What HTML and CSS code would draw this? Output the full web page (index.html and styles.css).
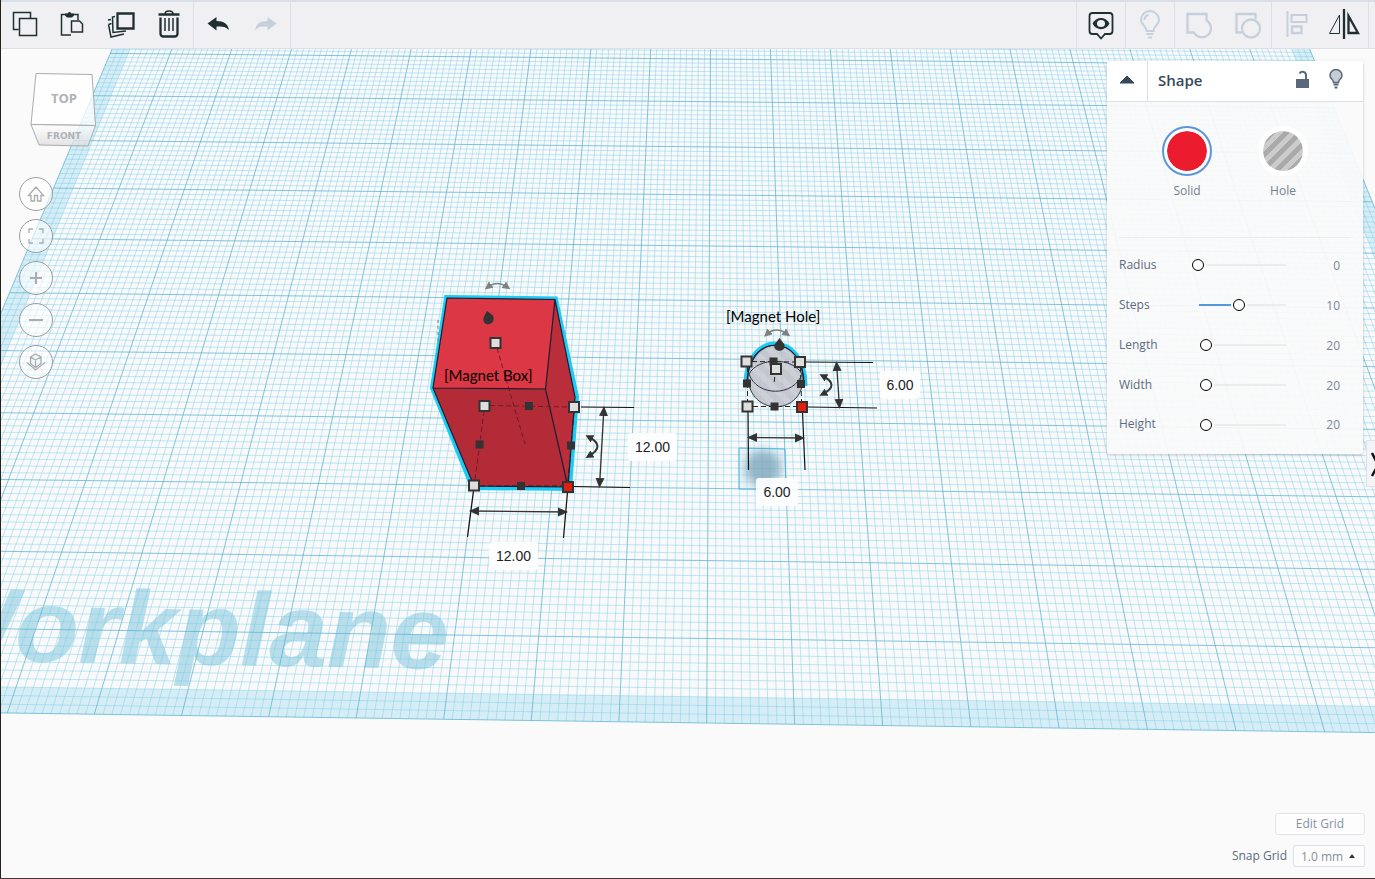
FILE: index.html
```
<!DOCTYPE html>
<html lang="en">
<head>
    <meta charset="UTF-8">
    <title>3D Editor</title>
    <meta name="viewport" content="width=device-width, initial-scale=1.0">
    <link rel="stylesheet" href="styles.css">
</head>
<body>
    <header class="toolbar">
        <div class="tool-group">
            <button class="tool" aria-label="Copy">
                <svg viewBox="0 0 48 48"><path d="M17.500 29.500h-5v-17h17v6M18.500 18.500h17v17h-17z"/></svg>
            </button>
            <button class="tool" aria-label="Paste">
                <svg viewBox="0 0 48 48"><path d="M22 35H12.500V14.500H29V20"/><path class="fill" d="M16 13.500h3c0-2 3-2 3 0h3v2l-2 2h-5l-2-2z"/><path d="M22.500 21h8l3 3v8h-11z"/></svg>
            </button>
            <button class="tool" aria-label="Duplicate">
                <svg viewBox="0 0 48 48"><path d="M18 16.500l-2.500.5.500 15.500 13-1.500M14 19.500l-3 .500M11.500 24.500l2.500 12.500 13-3M11.500 24.500l3-1"/><path class="thick" d="M20.500 13.500h16v15h-16z"/></svg>
            </button>
            <button class="tool" aria-label="Delete">
                <svg viewBox="0 0 48 48"><path class="thick" d="M13.500 14.500h21M15.500 17.500v16q0 3 3 3h11q3 0 3-3v-16"/><path d="M20 14c0-4 8-4 8 0M20 18v13M24 18v13M28 18v13"/></svg>
            </button>
        </div>
        <div class="tool-group">
            <button class="tool" aria-label="Undo">
                <svg viewBox="0 0 48 48"><path class="fill" d="M13.500 23.500L22.500 17v4C30 21 34 24 35 30c-3-3-6-4-12.500-3.500v4z"/></svg>
            </button>
            <button class="tool off" aria-label="Redo" disabled>
                <svg viewBox="0 0 48 48"><path class="fill" d="M34.500 23.500L25.500 17v4C18 21 14 24 13 30c3-3 6-4 12.500-3.500v4z"/></svg>
            </button>
        </div>
        <div class="spacer"></div>
        <div class="tool-group">
            <button class="tool" aria-label="Show all">
                <svg viewBox="0 0 48 48"><path class="frame" d="M15.500 13h17q3 0 3 3v15q0 3-3 3H28l-4 4.500-4-4.500h-4.500q-3 0-3-3V16q0-3 3-3z"/><path class="fill" d="M15.500 23.500C19 16 29 16 32.500 23.500 29 31 19 31 15.500 23.500z"/><ellipse class="eye" cx="24" cy="23.500" rx="4" ry="3.500"/></svg>
            </button>
        </div>
        <div class="tool-group">
            <button class="tool off" aria-label="Toggle hints" disabled>
                <svg viewBox="0 0 48 48"><path d="M20.500 31c0-5-5.500-6-5.500-11a9 9 0 0 1 18 0c0 5-5.500 6-5.500 11zM20.500 34h7M22 37.500h4M18.500 20q0-4 4-5"/></svg>
            </button>
        </div>
        <div class="tool-group">
            <button class="tool off" aria-label="Group" disabled>
                <svg viewBox="0 0 48 48"><path class="thick" d="M12.500 14h19v6.500a9 9 0 1 1-12.500 12H12.500z"/></svg>
            </button>
            <button class="tool off" aria-label="Ungroup" disabled>
                <svg viewBox="0 0 48 48"><path class="thick" d="M19 32.500h-5.500V14h19v5"/><circle class="thick" cx="28" cy="28.500" r="9"/></svg>
            </button>
        </div>
        <div class="tool-group">
            <button class="tool off" aria-label="Align" disabled>
                <svg viewBox="0 0 48 48"><path d="M15.500 11v26M19.500 15h15v7h-15z"/><path class="thick" d="M20 26.500h9.500v6.500H20z"/></svg>
            </button>
            <button class="tool" aria-label="Flip">
                <svg viewBox="0 0 48 48"><path class="thin" d="M9.500 33.500h10V15z"/><path class="thick" d="M24 9v30M28.500 16v17h9.500z"/></svg>
            </button>
        </div>
        <div class="toolbar-end"></div>
    </header>

    <main class="workspace">
        <svg class="scene" viewBox="0 49 1375 830" preserveAspectRatio="xMidYMin slice">
            <defs>
                <marker id="arrow" viewBox="0 0 10 10" refX="9" refY="5" markerWidth="10" markerHeight="10" markerUnits="userSpaceOnUse" orient="auto-start-reverse">
                    <path d="M0 0.500L10 5 0 9.500z" fill="#333"/>
                </marker>
                <marker id="turn" viewBox="0 0 8 8" refX="4" refY="4" markerWidth="8" markerHeight="8" markerUnits="userSpaceOnUse" orient="auto-start-reverse">
                    <path d="M0 0L8 4 0 8z" fill="context-stroke"/>
                </marker>
                <pattern id="stripes" width="12" height="12" patternUnits="userSpaceOnUse" patternTransform="rotate(-45)">
                    <rect width="12" height="12" fill="#c9cbd2"/>
                    <rect width="6" height="12" fill="#c0c2ca"/>
                </pattern>
                <filter id="soft" x="-50%" y="-50%" width="200%" height="200%">
                    <feGaussianBlur stdDeviation="5"/>
                </filter>
            </defs>

            <path id="plane" class="plane"/>
            <path id="band" class="band"/>
            <text class="plane-name" x="-70" y="661" transform="rotate(1)">Workplane</text>
            <path id="minor" class="minor"/>
            <path id="major" class="major"/>

            <!-- magnet box -->
            <path class="glow" d="M447 298L555 299.500 576 397 569 488 473 487 433 388z"/>
            <path fill="#dc3744" d="M447 298L555 299.500 545.500 389 433 388z"/>
            <path fill="#b32b37" d="M433 388L545.500 389 568 487 474 486z"/>
            <path fill="#b92e3a" d="M555 299.500L575 397 568 487 545.500 389z"/>
            <path class="edge" d="M447 298L555 299.500 575 397 568 487 474 486 433 388zM433 388L545.500 389 568 487M545.500 389L555 299.500"/>
            <path class="dash faint" d="M497 348L525 444M490 405.500L569 407M484 411L475 480"/>
            <path class="dash" d="M574 412L568 481M480 486H562"/>
            <path class="cone" d="M487 311L493 315.500c4 11-13 12-9 1z"/>
            <text class="object-name" x="444" y="381">[Magnet Box]</text>
            <path class="turn-light" d="M488 287Q497 280 507 287"/>
            <path class="turn-light dotted" d="M438 320V341"/>
            <path class="turn" d="M589 437Q606 446 589 456"/>
            <path class="guide" d="M581 407L634 407.500M574 486.500L630 487.500M473.500 491L467.500 537M567.500 492L563.500 538"/>
            <path class="measure" d="M604 407L599.500 487"/>
            <path class="measure" d="M470 511L567 512"/>
            <path class="knob" d="M525 402h8v8h-8zM475.500 440.500h8v8h-8zM567 441.500h8v8h-8zM517 482h8v8h-8z"/>
            <path class="handle" d="M490.500 338h10v10h-10zM479.500 401h10v10h-10zM569 402h10v10h-10zM469 480.500h10v10h-10z"/>
            <path class="handle active" d="M563 482h10v10h-10z"/>

            <!-- magnet hole -->
            <circle class="shadow" cx="763" cy="468" r="18"/>
            <path class="shadow-box" d="M739 448L785 449 786 489 739 489z"/>
            <path class="glow" d="M746.500 385C746 331 805 331 804.500 386"/>
            <path class="hole" d="M748 378C748 334 803 334 803 380 801 416 750 416 748 378z"/>
            <path class="hole-line" d="M749 374C758 357 793 357 802 374 794 397 757 397 749 374"/>
            <path class="edge" d="M747 385C747 332 804 332 804 385"/>
            <path class="dash" d="M752 361.500L795 362M747.500 367V401M753 406.500H797M800.500 367L801.500 401M775.500 369L774 384"/>
            <path class="cone" d="M779.500 338L784 344c4 9-13 9-9 0z"/>
            <text class="object-name" x="726" y="322">[Magnet Hole]</text>
            <path class="turn-light" d="M767 334Q776 326 787 334"/>
            <path class="turn" d="M823 376Q840 385 823 394"/>
            <path class="guide" d="M805 362L873 362.500M807 407L877 408M748 411L748.500 470M802.500 412L805 470"/>
            <path class="measure" d="M836.500 362L839.500 408"/>
            <path class="measure" d="M748 437.500L804 438"/>
            <path class="knob" d="M769.500 357.500h8v8h-8zM743 379.500h8v8h-8zM797 380h8v8h-8zM770.500 402.500h8v8h-8z"/>
            <path class="handle" d="M741.500 356.500h10v10h-10zM795 357h10v10h-10zM771 364h10v10h-10zM742.500 401.500h10v10h-10z"/>
            <path class="handle active" d="M797 402h10v10h-10z"/>

            <foreignObject x="628" y="433" width="49" height="28"><input class="dimension" aria-label="Box width" value="12.00"></foreignObject>
            <foreignObject x="489" y="542" width="49" height="28"><input class="dimension" aria-label="Box length" value="12.00"></foreignObject>
            <foreignObject x="880" y="371" width="40" height="28"><input class="dimension" aria-label="Hole width" value="6.00"></foreignObject>
            <foreignObject x="756" y="478" width="42" height="28"><input class="dimension" aria-label="Hole length" value="6.00"></foreignObject>
        </svg>

        <div class="view-controls">
            <svg class="view-cube" viewBox="0 0 68 76">
                <defs>
                    <linearGradient id="shade" x1="0" y1="0" x2="0" y2="1">
                        <stop offset="0" stop-color="#fff"/>
                        <stop offset="1" stop-color="#dcdddf"/>
                    </linearGradient>
                </defs>
                <path class="cube-top" d="M8 1.500L64 2.500 67.500 53.500 3 52.500z"/>
                <path class="cube-front" d="M3 52.500L67.500 53.500 60 74 11 73z"/>
                <text class="cube-label" x="36" y="31">TOP</text>
                <text class="cube-label small" x="36" y="67">FRONT</text>
            </svg>
            <nav class="view-buttons">
                <button aria-label="Home view"><svg viewBox="0 0 34 34"><path d="M9.500 18.500L17 10l7.500 8.500H22V24h-3.500v-5.500h-3V24H12v-5.500z"/></svg></button>
                <button aria-label="Fit view"><svg viewBox="0 0 34 34"><path d="M10 14v-4h4M20 10h4v4M24 20v4h-4M14 24h-4v-4"/></svg></button>
                <button aria-label="Zoom in"><svg viewBox="0 0 34 34"><path class="bold" d="M11 17h12M17 11v12"/></svg></button>
                <button aria-label="Zoom out"><svg viewBox="0 0 34 34"><path class="bold" d="M10 17h14"/></svg></button>
                <button aria-label="Perspective"><svg viewBox="0 0 34 34"><path d="M11.500 12l5-3 5.500 3v6.500l-5.500 4-5-4zM11.500 12l5 3 5.500-3M16.500 15v7.500M8 17.500l8.500 7.500 9.500-7.500"/></svg></button>
            </nav>
        </div>

        <div class="side">
            <aside class="panel">
                <div class="panel-header">
                    <button class="collapse" aria-label="Collapse panel"><svg viewBox="0 0 16 9"><path d="M1 8L8 1l7 7z"/></svg></button>
                    <h1 class="panel-title">Shape</h1>
                    <button class="icon-button" aria-label="Lock"><svg viewBox="0 0 16 20"><path class="solid" d="M2 10h13v9H2z"/><path class="line" d="M12 10V5.500a3.500 3.500 0 0 0-6.500-1"/></svg></button>
                    <button class="icon-button" aria-label="Hide"><svg viewBox="0 0 16 20"><path class="glass" d="M5.500 13.500C5.500 10 2 10 2 6.500a6 6 0 0 1 12 0C14 10 10.500 10 10.500 13.500z"/><path class="line" d="M5.500 15.500h5M6.500 18.500h3"/></svg></button>
                </div>
                <div class="swatches">
                    <label class="swatch"><input type="radio" name="fill" class="swatch-solid" checked>Solid</label>
                    <label class="swatch"><input type="radio" name="fill" class="swatch-hole">Hole</label>
                </div>
                <div class="params">
                    <div class="param"><label for="radius">Radius</label><input type="range" id="radius" min="0" max="10" value="0"><input class="value" aria-label="Radius value" value="0"></div>
                    <div class="param"><label for="steps">Steps</label><input type="range" id="steps" class="filled" min="0" max="20" value="10"><input class="value" aria-label="Steps value" value="10"></div>
                    <div class="param"><label for="length">Length</label><input type="range" id="length" min="0" max="200" value="20"><input class="value" aria-label="Length value" value="20"></div>
                    <div class="param"><label for="width">Width</label><input type="range" id="width" min="0" max="200" value="20"><input class="value" aria-label="Width value" value="20"></div>
                    <div class="param"><label for="height">Height</label><input type="range" id="height" min="0" max="200" value="20"><input class="value" aria-label="Height value" value="20"></div>
                </div>
            </aside>
            <div class="grid-controls">
                <button class="edit-grid">Edit Grid</button>
                <div class="snap">
                    <label for="snap">Snap Grid</label>
                    <div class="snap-select">
                        <select id="snap"><option>1.0 mm</option></select>
                    </div>
                </div>
            </div>
        </div>
        <button class="drawer" aria-label="Open shapes"><svg viewBox="0 0 9 47"><path d="M5 12L11 24 5 35"/></svg></button>
    </main>

    <script>
        // project a point of the 200mm workplane, s from the middle line, v from the front edge
        function project(s, v) {
            const w = 1 + 0.0416 * v - 0.00065 * s;
            const x = (706.7 + 87.42 * s + 29.9 * v) / w;
            const y = (723 - 57.9 * v + 0.79 * s) / w;
            return x.toFixed(1) + ' ' + y.toFixed(1);
        }

        function line(s1, v1, s2, v2) {
            return 'M' + project(s1, v1) + 'L' + project(s2, v2);
        }

        function box(s, v, back) {
            return 'M' + [project(-s, v), project(s, v), project(s, back), project(-s, back)].join('L') + 'z';
        }

        const depth = 13;
        let minor = '';
        let major = '';
        for (let i = -100; i <= 100; i++) {
            const d = line(i / 10, 0, i / 10, depth);
            if (i % 10 === 0) major += d; else minor += d;
        }
        for (let i = 0; i <= depth * 10; i++) {
            const d = line(-10, i / 10, 10, i / 10);
            if (i % 10 === 0) major += d; else minor += d;
        }
        document.getElementById('plane').setAttribute('d', box(10, 0, depth));
        document.getElementById('band').setAttribute('d', box(10, 0, depth) + box(9.7, 0.3, depth));
        document.getElementById('minor').setAttribute('d', minor);
        document.getElementById('major').setAttribute('d', major);
    </script>
</body>
</html>
```
FILE: styles.css
```
* {
    box-sizing: border-box;
}
body {
    margin: 0;
    height: 100vh;
    display: flex;
    flex-direction: column;
    position: relative;
    overflow: hidden;
    background: #fafafa;
    color: #5b6b80;
    font-family: "Open Sans", "Noto Sans", sans-serif;
    font-size: 12px;
}
body::after {
    content: "";
    position: absolute;
    inset: 0;
    border-left: 1px solid #25231c;
    border-bottom: 1px solid #4a3436;
    pointer-events: none;
}
button {
    padding: 0;
    border: none;
    background: none;
    font-family: inherit;
    cursor: pointer;
}
svg {
    display: block;
}

/* toolbar */
.toolbar {
    display: flex;
    height: 49px;
    padding-left: 1px;
    background: #f0f0f3;
    border-top: 2px solid #dbdfe9;
    border-bottom: 1px solid #dcdfe5;
}
.tool-group {
    display: flex;
    border-right: 1px solid #dcdfe5;
}
.spacer {
    flex: 1;
    border-right: 1px solid #dcdfe5;
}
.toolbar-end {
    width: 6px;
}
.tool {
    width: 48px;
    height: 46px;
    color: #20302f;
}
.tool svg {
    width: 48px;
    height: 48px;
    margin-top: -2px;
    fill: none;
    stroke: currentColor;
    stroke-width: 1.5;
}
.tool .thin {
    stroke-width: 1;
}
.tool .frame {
    stroke-width: 1.8;
}
.tool .thick {
    stroke-width: 2.3;
}
.tool .fill {
    fill: currentColor;
    stroke: none;
}
.tool .eye {
    fill: #f0f0f3;
    stroke: none;
}
.tool.off {
    color: #c5d0dc;
}
.tool.off svg {
    stroke-width: 2;
}

/* scene */
.workspace {
    flex: 1;
    min-height: 0;
    position: relative;
    display: flex;
    justify-content: space-between;
}
.scene {
    position: absolute;
    inset: 0;
    width: 100%;
    height: 100%;
}
.plane {
    fill: #f9f9f9;
}
.band {
    fill: #d7edf5;
    fill-rule: evenodd;
}
.minor {
    fill: none;
    stroke: #6fcdec;
    stroke-opacity: 0.43;
}
.major {
    fill: none;
    stroke: #4fafd0;
    stroke-opacity: 0.7;
}
.plane-name {
    font: italic bold 104px "Liberation Sans", Arial, sans-serif;
    fill: #b9deea;
}
.glow {
    fill: none;
    stroke: #1ccbf3;
    stroke-width: 6;
}
.edge {
    fill: none;
    stroke: #1b1b30;
    stroke-width: 1.2;
}
.dash {
    fill: none;
    stroke: #222;
    stroke-dasharray: 5 3;
}
.faint {
    stroke: #701c26;
}
.cone {
    fill: #333;
}
.object-name {
    font: 15px Lato, sans-serif;
    fill: #000;
}
.guide {
    fill: none;
    stroke: #111;
    stroke-width: 1.2;
}
.measure {
    fill: none;
    stroke: #333;
    stroke-width: 1.3;
    marker-start: url(#arrow);
    marker-end: url(#arrow);
}
.turn,
.turn-light {
    fill: none;
    stroke: #333;
    stroke-width: 2;
    marker-start: url(#turn);
    marker-end: url(#turn);
}
.turn-light {
    stroke: #808080;
    stroke-width: 1.3;
}
.dotted {
    stroke-width: 1;
    stroke-dasharray: 3 3;
    marker-start: none;
    marker-end: none;
}
.knob {
    fill: #333;
}
.handle {
    fill: #dedede;
    stroke: #333;
    stroke-width: 2;
}
.active {
    fill: #e01f10;
}
.hole {
    fill: url(#stripes);
    stroke: #2d3442;
    fill-opacity: 0.9;
}
.hole-line {
    fill: none;
    stroke: #2d3442;
}
.shadow {
    fill: #5e8ba5;
    opacity: 0.75;
    filter: url(#soft);
}
.shadow-box {
    fill: #bfe3ef;
    fill-opacity: 0.25;
    stroke: #4bb6dd;
}
.dimension {
    display: block;
    width: 100%;
    height: 28px;
    padding: 0;
    border: none;
    border-radius: 3px;
    background: rgba(255, 255, 255, 0.9);
    color: #222;
    font: 14px "Liberation Sans", Arial, sans-serif;
    text-align: center;
}

/* view cube and buttons */
.view-controls {
    position: relative;
    align-self: flex-start;
    padding: 23px 0 0 19px;
}
.view-cube {
    width: 68px;
    height: 76px;
    margin-left: 9px;
}
.cube-top,
.cube-front {
    fill: rgba(255, 255, 255, 0.75);
    stroke: #a9abad;
}
.cube-front {
    fill: url(#shade);
    fill-opacity: 0.8;
}
.cube-label {
    font: bold 13px "Open Sans", sans-serif;
    fill: #aeb2b6;
    text-anchor: middle;
}
.cube-label.small {
    font: bold 9px "DejaVu Sans", sans-serif;
}
.view-buttons {
    display: flex;
    flex-direction: column;
    gap: 8px;
    margin-top: 29px;
}
.view-buttons button {
    width: 34px;
    height: 34px;
    border: 1px solid #9b9ea2;
    border-radius: 50%;
    background: rgba(255, 255, 255, 0.6);
}
.view-buttons svg {
    width: 34px;
    height: 34px;
    margin: -1px;
    fill: none;
    stroke: #a9adaf;
    stroke-width: 1.3;
}
.view-buttons .bold {
    stroke-width: 2;
}

/* right side */
.side {
    position: relative;
    display: flex;
    flex-direction: column;
    justify-content: space-between;
    align-items: flex-end;
    padding: 12px 10px 12px 0;
}
.panel {
    width: 256px;
    margin-right: 2px;
    border-radius: 3px;
    background: rgba(250, 250, 250, 0.93);
    box-shadow: 0 1px 3px rgba(80, 100, 130, 0.35);
}
.panel-header {
    display: flex;
    align-items: center;
    height: 41px;
    padding-right: 19px;
    border-bottom: 1px solid #dcdfe5;
    border-radius: 3px 3px 0 0;
    background: #fff;
}
.collapse {
    display: flex;
    align-items: center;
    justify-content: center;
    align-self: stretch;
    width: 41px;
    border-right: 1px solid #dcdfe5;
}
.collapse svg {
    width: 16px;
    height: 9px;
    margin-bottom: 4px;
    fill: #34495e;
    stroke: #34495e;
    stroke-linejoin: round;
}
.panel-title {
    flex: 1;
    margin: 0 0 2px 10px;
    color: #34495e;
    font-size: 15px;
    font-weight: 600;
}
.icon-button {
    margin-left: 18px;
}
.icon-button svg {
    width: 16px;
    height: 20px;
    margin-bottom: 5px;
}
.icon-button .solid {
    fill: #5a6879;
}
.icon-button .line {
    fill: none;
    stroke: #5a6879;
    stroke-width: 2;
}
.icon-button .glass {
    fill: #c5ccd4;
    stroke: #5a6879;
    stroke-width: 1.5;
}
.swatches {
    display: flex;
    justify-content: center;
    gap: 46px;
    margin: 0 12px;
    padding: 24px 0 38px;
    border-bottom: 1px solid #ececec;
}
.swatch {
    display: flex;
    flex-direction: column;
    align-items: center;
    gap: 6px;
    width: 50px;
    line-height: 17px;
    color: #738090;
}
.swatch input {
    appearance: none;
    width: 50px;
    height: 50px;
    margin: 0;
    border: 5px solid #fff;
    border-radius: 50%;
}
.swatch-solid {
    background: #eb1c2d content-box;
}
.swatch-hole {
    background: repeating-linear-gradient(135deg, #ccc 0 5px, #aaa 5px 10px);
    background-clip: padding-box;
}
.swatch input:checked {
    border: 2px solid #5a96db;
    padding: 3px;
    box-shadow: inset 0 0 0 3px #fff;
}
.params {
    padding: 7px 12px 10px;
}
.param {
    display: flex;
    align-items: center;
    height: 40px;
}
.param:last-child {
    height: 39px;
}
.param label {
    width: 73px;
    padding-bottom: 2px;
}
.param input[type="range"] {
    appearance: none;
    width: 94px;
    height: 14px;
    margin: 0;
    background: linear-gradient(#ececec, #ececec) 7px 6px / 100% 2px no-repeat;
}
.param input.filled {
    background: linear-gradient(90deg, #5596dc 40px, #ececec 40px) 7px 6px / 100% 2px no-repeat;
}
.param input[type="range"]::-webkit-slider-thumb {
    appearance: none;
    width: 12px;
    height: 12px;
    border: 1px solid #000;
    border-radius: 50%;
    background: #fff;
    box-shadow: 0 0 0 2px #fafafa;
}
.value {
    width: 40px;
    margin-left: auto;
    margin-right: 11px;
    padding: 0;
    border: none;
    background: none;
    color: #7b8796;
    font: 12px "Open Sans", sans-serif;
    text-align: right;
}

/* grid settings */
.grid-controls {
    display: flex;
    flex-direction: column;
    align-items: flex-end;
    gap: 10px;
}
.edit-grid {
    width: 90px;
    height: 22px;
    border: 1px solid #e2e4e8;
    border-radius: 3px;
    background: #fdfdfd;
    color: #8592a3;
    font-size: 12px;
    line-height: 18px;
}
.snap {
    display: flex;
    align-items: center;
    gap: 6px;
}
.snap label {
    padding-bottom: 2px;
}
.snap-select {
    display: grid;
    align-items: center;
    width: 72px;
}
.snap-select select {
    grid-area: 1 / 1;
    appearance: none;
    height: 22px;
    padding: 0 7px;
    border: 1px solid #dcdfe9;
    border-radius: 2px;
    background: #fdfdfd;
    color: #8a8f96;
    font: 12px "Open Sans", sans-serif;
}
.snap-select::after {
    content: "";
    grid-area: 1 / 1;
    justify-self: end;
    margin-right: 10px;
    border: 3px solid transparent;
    border-top: none;
    border-bottom: 4px solid #333;
    pointer-events: none;
}
.drawer {
    position: absolute;
    right: 0;
    top: 391px;
    width: 9px;
    height: 47px;
    border: 1px solid #dfe1ea;
    border-right: none;
    background: #f4f4f8;
    overflow: hidden;
}
.drawer svg {
    width: 9px;
    height: 47px;
    fill: none;
    stroke: #111;
    stroke-width: 2.5;
}
```
